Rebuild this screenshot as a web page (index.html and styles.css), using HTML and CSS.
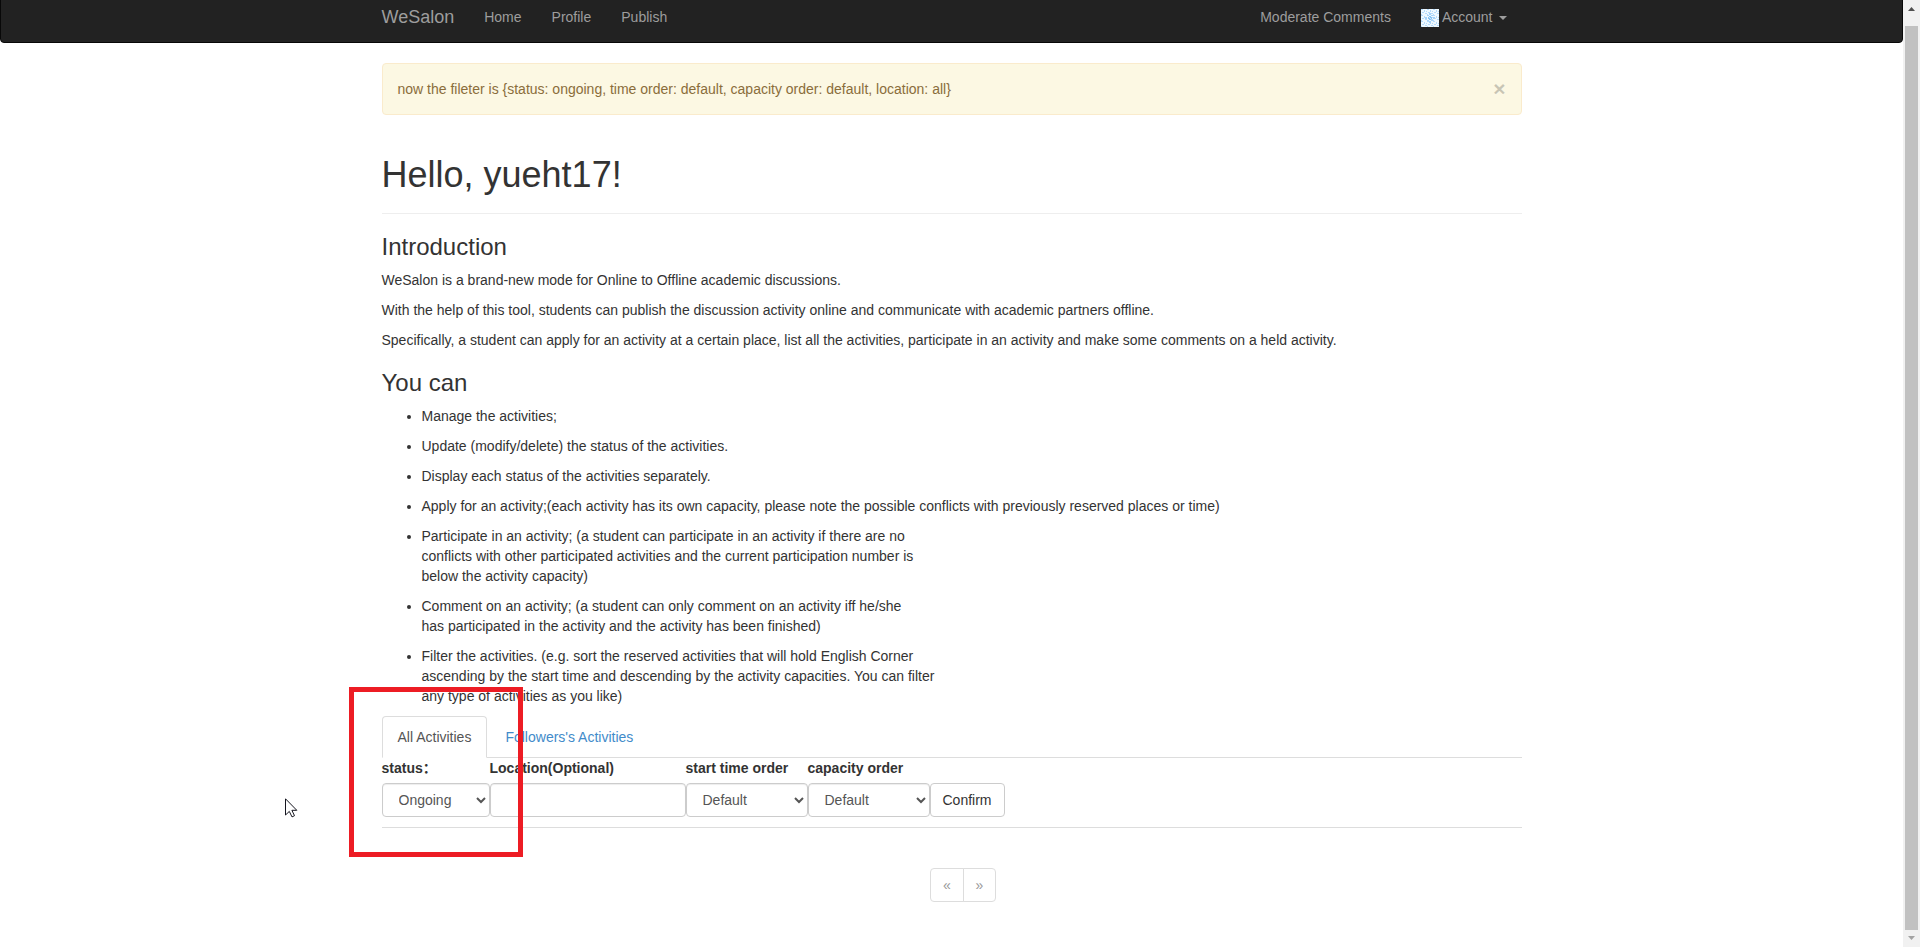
FILE: index.html
```html
<!DOCTYPE html>
<html lang="en">
<head>
<meta charset="utf-8">
<title>WeSalon</title>
<link rel="stylesheet" href="styles.css">
</head>
<body>
<div class="page">
  <nav class="navbar">
    <div class="container navbar-inner">
      <a class="brand">WeSalon</a>
      <ul class="nav-links">
        <li>Home</li><li>Profile</li><li>Publish</li>
      </ul>
      <ul class="nav-links nav-right">
        <li>Moderate Comments</li>
        <li class="account"><svg class="avatar" width="18" height="18" viewBox="0 0 18 18" shape-rendering="crispEdges">
          <defs><pattern id="knit" width="6" height="6" patternUnits="userSpaceOnUse"><path fill="#b4dafa" d="M0 0h2v1h-2zM3 1h1v2h-1zM1 3h2v1h-2zM4 4h2v1h-2zM0 5h1v1h-1zM5 2h1v1h-1z"/></pattern></defs>
          <rect width="18" height="18" fill="#eef8ff"/><rect width="18" height="18" fill="url(#knit)"/>
          <path fill="#a5d2f8" d="M8 4h2v2h-2zM4 8h2v2h-2zM12 8h2v2h-2zM8 12h2v2h-2zM6 6h2v1h-2zM10 6h2v1h-2zM6 11h2v1h-2zM10 11h2v1h-2z"/><path fill="#86c2f3" d="M8 7h2v1h1v2h-1v1h-2v-1h-1v-2h1z"/><path fill="#d4ebfd" d="M8 8h1v1h-1zM9 9h1v1h-1z"/>
        </svg><span class="account-name">Account</span><b class="caret"></b></li>
      </ul>
    </div>
  </nav>
  <main class="container">
    <div class="alert"><span>now the fileter is {status: ongoing, time order: default, capacity order: default, location: all}</span><button class="close">×</button></div>
    <div class="page-header"><h1>Hello, yueht17!</h1></div>
    <h3>Introduction</h3>
    <p>WeSalon is a brand-new mode for Online to Offline academic discussions.</p>
    <p>With the help of this tool, students can publish the discussion activity online and communicate with academic partners offline.</p>
    <p>Specifically, a student can apply for an activity at a certain place, list all the activities, participate in an activity and make some comments on a held activity.</p>
    <h3>You can</h3>
    <ul class="features">
      <li><p>Manage the activities;</p></li>
      <li><p>Update (modify/delete) the status of the activities.</p></li>
      <li><p>Display each status of the activities separately.</p></li>
      <li><p>Apply for an activity;(each activity has its own capacity, please note the possible conflicts with previously reserved places or time)</p></li>
      <li><p>Participate in an activity; (a student can participate in an activity if there are no<br>conflicts with other participated activities and the current participation number is<br>below the activity capacity)</p></li>
      <li><p>Comment on an activity; (a student can only comment on an activity iff he/she<br>has participated in the activity and the activity has been finished)</p></li>
      <li><p>Filter the activities. (e.g. sort the reserved activities that will hold English Corner<br>ascending by the start time and descending by the activity capacities. You can filter<br>any type of activities as you like)</p></li>
    </ul>
    <ul class="tabs">
      <li class="active">All Activities</li>
      <li>Followers's Activities</li>
    </ul>
    <form class="filters">
      <div class="field status"><label lang="zh-CN">status：</label><select class="control"><option>Ongoing</option></select></div>
      <div class="field location"><label>Location(Optional)</label><input class="control" type="text"></div>
      <div class="field order"><label>start time order</label><select class="control"><option>Default</option></select></div>
      <div class="field order"><label>capacity order</label><select class="control"><option>Default</option></select></div>
      <button class="btn" type="button">Confirm</button>
    </form>
    <div class="pagination"><span>«</span><span>»</span></div>
  </main>
</div>
<aside class="scrollbar">
  <svg width="17" height="26" viewBox="0 0 17 26"><path fill="#505050" d="M5 11h7L8.500 7z"/></svg>
  <div class="thumb"></div>
  <svg width="17" height="17" viewBox="0 0 17 17"><path fill="#a3a3a3" d="M5 6h7L8.500 10z"/></svg>
</aside>
<div class="highlight"></div>
<svg class="pointer" width="13" height="20" viewBox="0 0 13 20"><path fill="#fff" stroke="#15151f" stroke-width="1" d="M.5.8v16.200l3.800-3.600 2.700 5.500 2.500-1.200-2.600-5.400h4.900z"/></svg>
</body>
</html>
```
FILE: styles.css
```css
* { box-sizing: border-box; }
body {
  margin: 0;
  height: 947px;
  display: grid;
  grid-template-columns: 1fr 17px;
  overflow: hidden;
  position: relative;
  font: 14px/20px "Liberation Sans", Arial, "Noto Sans CJK SC", sans-serif;
  color: #333;
  background: #fff;
}
.page { height: 947px; overflow: hidden; }
.container { width: 1170px; margin: 0 auto; padding: 0 15px; }
ul { margin: 0; padding: 0; list-style: none; }
p { margin: 0 0 10px; }
h1, h3 { font-weight: 500; margin: 20px 0 10px; }
h1 { font-size: 36px; line-height: 39px; }
h3 { font-size: 24px; line-height: 26px; }

.navbar {
  height: 52px;
  margin: -9px 0 20px;
  background: #222;
  border: 1px solid #080808;
  border-radius: 4px;
  color: #9d9d9d;
}
.navbar-inner { display: flex; }
.brand { padding: 15px 15px 15px 0; font-size: 18px; }
.nav-links { display: flex; }
.nav-links li { padding: 15px; }
.nav-right { margin-left: auto; }
.account { display: flex; align-items: center; }
.avatar { margin: 2px 3px 0 0; }
.caret {
  margin: 2px 0 0 6px;
  border-top: 4px solid;
  border-left: 4px solid transparent;
  border-right: 4px solid transparent;
}

.alert {
  display: flex;
  justify-content: space-between;
  padding: 15px;
  border: 1px solid #faebcc;
  border-radius: 4px;
  background: #fcf8e3;
  color: #8a6d3b;
}
.close {
  height: 20px;
  padding: 0;
  border: 0;
  background: none;
  font: bold 21px/20px "Liberation Sans", Arial, sans-serif;
  color: #000;
  text-shadow: 0 1px 0 #fff;
  opacity: .2;
}
.page-header { margin: 40px 0 20px; padding-bottom: 9px; border-bottom: 1px solid #eee; }
.page-header h1 { margin-top: 0; }
.features { padding-left: 40px; list-style: disc; }

.tabs { display: flex; border-bottom: 1px solid #ddd; }
.tabs li {
  margin: 0 2px -1px 0;
  padding: 10px 15px;
  border: 1px solid transparent;
  border-radius: 4px 4px 0 0;
  color: #428bca;
}
.tabs .active { border-color: #ddd #ddd #fff; background: #fff; color: #555; }

.filters { display: flex; align-items: flex-end; padding-bottom: 10px; border-bottom: 1px solid #ddd; }
.field { display: flex; flex-direction: column; }
.field label { height: 20px; margin-bottom: 5px; font-weight: 700; white-space: nowrap; }
.status { width: 108px; }
.location { width: 196px; }
.order { width: 122px; }
.control {
  width: 100%;
  height: 34px;
  padding: 6px 12px;
  border: 1px solid #ccc;
  border-radius: 4px;
  background-color: #fff;
  box-shadow: inset 0 1px 1px rgba(0, 0, 0, .075);
  font: inherit;
  color: #555;
}
.btn {
  height: 34px;
  padding: 6px 12px;
  border: 1px solid #ccc;
  border-radius: 4px;
  background: #fff;
  font: inherit;
  color: #333;
}
.pagination { display: flex; justify-content: center; margin-top: 40px; padding-left: 23px; color: #999; }
.pagination span { width: 33.500px; padding: 6px 12px; border: 1px solid #ddd; }
.pagination span:first-child { border-radius: 4px 0 0 4px; }
.pagination span:last-child { margin-left: -1px; border-radius: 0 4px 4px 0; }

.scrollbar { display: flex; flex-direction: column; height: 947px; background: #f1f1f1; }
.thumb { flex: 1; margin: 0 2px; background: #c1c1c1; }

.highlight {
  position: absolute;
  left: 349px;
  top: 687px;
  width: 174px;
  height: 170px;
  border: 5px solid #ed1c24;
}
.pointer { position: absolute; left: 285px; top: 798px; }
```
